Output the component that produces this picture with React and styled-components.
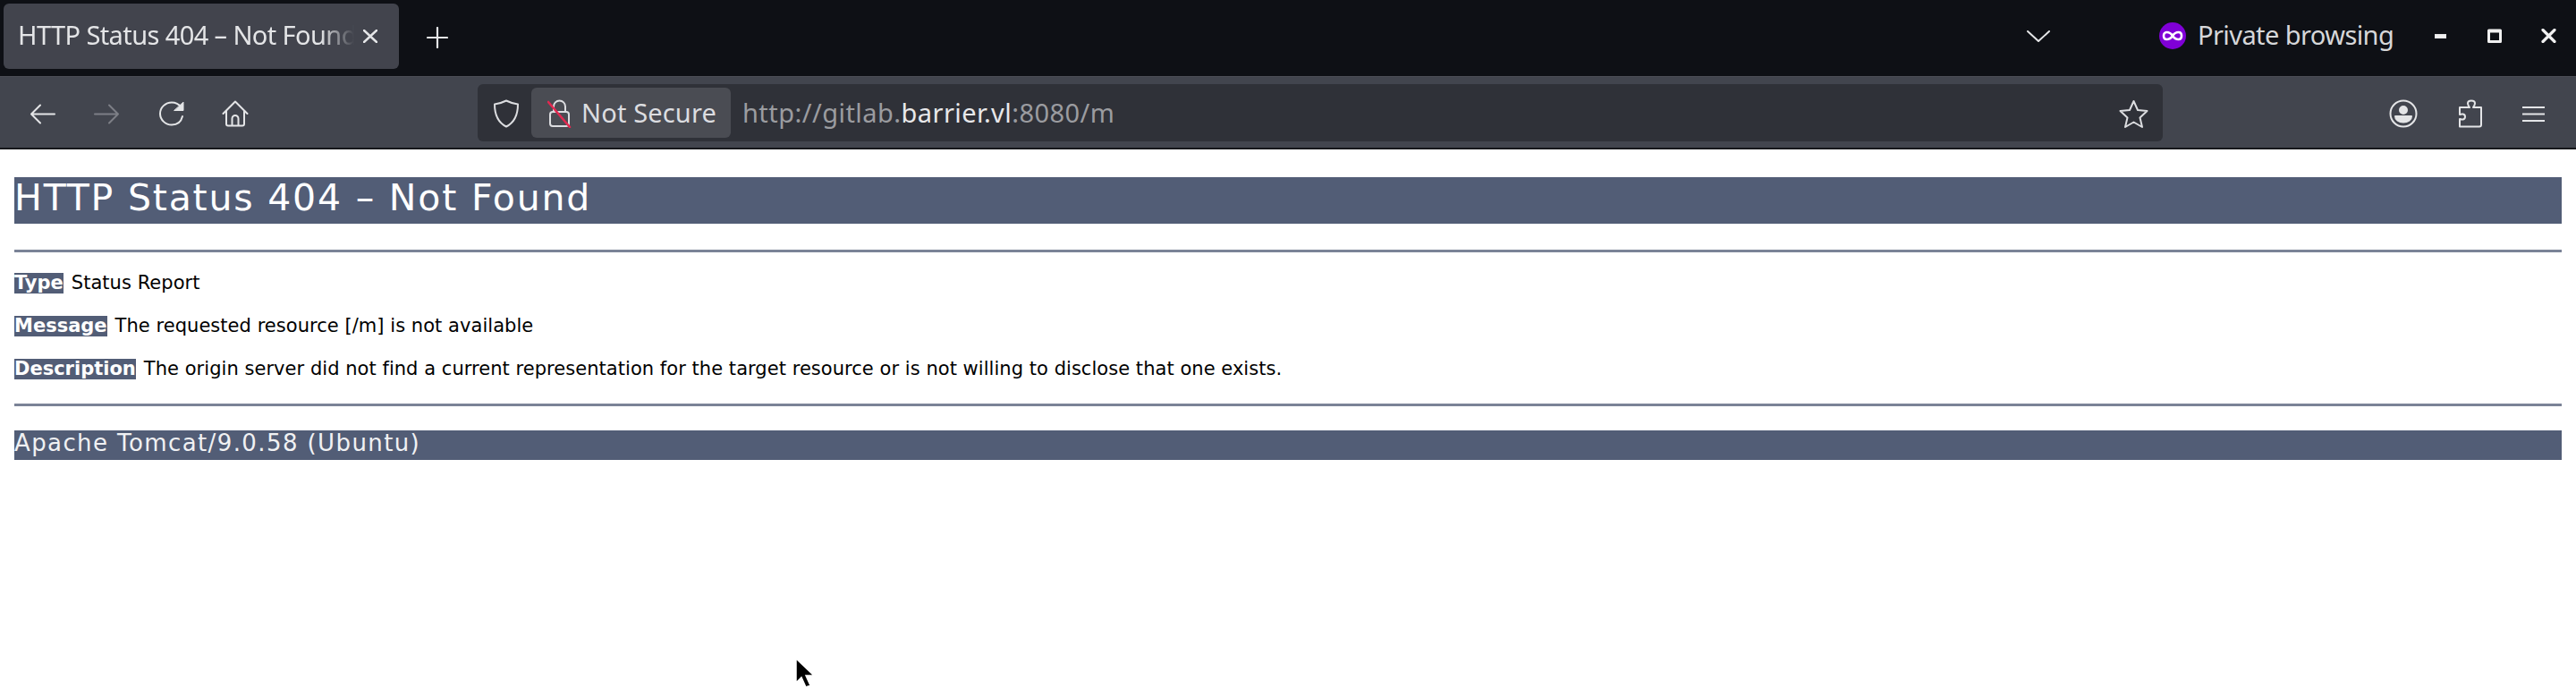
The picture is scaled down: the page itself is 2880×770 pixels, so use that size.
import React from "react";
import styled, { createGlobalStyle } from "styled-components";

const GlobalStyle = createGlobalStyle`
  html, body {
    margin: 0;
    padding: 0;
    background: #fff;
  }
  body {
    font-family: "DejaVu Sans", sans-serif;
    overflow: hidden;
  }
`;

const Window = styled.div`
  position: relative;
  width: 2880px;
  height: 770px;
  overflow: hidden;
  background: #fff;
`;

const TabBar = styled.div`
  height: 85px;
  box-sizing: border-box;
  background: #0e1015;
  display: flex;
  align-items: flex-start;
  padding-top: 4px;
  padding-left: 4px;
`;

const Tab = styled.div`
  position: relative;
  width: 442px;
  height: 73px;
  box-sizing: border-box;
  padding: 0 24px 0 16px;
  border-radius: 6px;
  background: #42444d;
  display: flex;
  align-items: center;
  justify-content: space-between;
  overflow: hidden;
`;

const TabTitle = styled.span`
  width: 376px;
  overflow: hidden;
  white-space: nowrap;
  color: #e4e5e7;
  font-family: "Noto Sans", sans-serif;
  font-size: 29px;
  letter-spacing: -0.6px;
  margin-top: -4px;
  -webkit-mask-image: linear-gradient(to right, #000 90%, transparent 100%);
  mask-image: linear-gradient(to right, #000 90%, transparent 100%);
`;

const NewTab = styled.div`
  display: flex;
  margin: 26px 0 0 31px;
`;

const TabBarRight = styled.div`
  margin-left: auto;
  display: flex;
  align-items: center;
  height: 72px;
  color: #e4e5e7;
`;

const PrivateLabel = styled.span`
  color: #d6d7d9;
  font-family: "Noto Sans", sans-serif;
  font-size: 29px;
  letter-spacing: -0.58px;
  margin: -4px 0 0 13px;
  width: 265px;
  white-space: nowrap;
`;

const Toolbar = styled.div`
  height: 82px;
  box-sizing: border-box;
  background: #42454e;
  border-top: 1px solid #4c4e56;
  border-bottom: 2px solid #16171b;
  display: flex;
  align-items: center;
`;

const NavGroup = styled.div`
  display: flex;
  align-items: center;
  width: 534px;
  flex: none;
  padding: 3px 0 0 33px;
  box-sizing: border-box;
`;

const UrlBar = styled.div`
  width: 1884px;
  height: 64px;
  flex: none;
  box-sizing: border-box;
  background: #2f3138;
  border-radius: 6px;
  padding: 2px 16px 0 17px;
  display: flex;
  align-items: center;
`;

const NotSecure = styled.div`
  width: 223px;
  height: 56px;
  box-sizing: border-box;
  margin: -2px 0 0 13px;
  padding: 2px 0 0 18px;
  border-radius: 6px;
  background: #4a4c53;
  display: flex;
  align-items: center;
  gap: 11px;
`;

const NotSecureText = styled.span`
  color: #dcdde0;
  font-family: "Noto Sans", sans-serif;
  font-size: 29px;
  letter-spacing: 0.15px;
  margin-top: -3px;
  white-space: nowrap;
`;

const Url = styled.div`
  flex: 1;
  margin-left: 13px;
  color: #9b9ca0;
  font-family: "Noto Sans", sans-serif;
  font-size: 29px;
  letter-spacing: 0.45px;
  margin-top: -3px;
  white-space: nowrap;
`;

const UrlHost = styled.span`
  color: #e8e8ea;
`;

const ToolActions = styled.div`
  flex: 1;
  display: flex;
  align-items: center;
  padding: 3px 0 0 253px;
`;

const Page = styled.main`
  padding: 31px 16px 0;
  color: #000;
`;

const Heading = styled.h1`
  margin: 0;
  height: 52px;
  padding-left: 0;
  background: #525d76;
  color: #fff;
  font-family: "DejaVu Sans", sans-serif;
  font-weight: 400;
  font-size: 41px;
  line-height: 47px;
  letter-spacing: 1.8px;
  white-space: nowrap;
`;

const Rule = styled.hr`
  margin: ${(props) => props.$top}px 0 0;
  height: 3px;
  border: 0;
  background: #7b8397;
`;

const Line = styled.p`
  margin: ${(props) => props.$top}px 0 0;
  height: 23px;
  display: flex;
  align-items: center;
  white-space: pre;
  font-family: "DejaVu Sans", sans-serif;
  font-size: 21px;
  line-height: 23px;
  letter-spacing: 0.04px;
`;

const Label = styled.b`
  background: #525d76;
  color: #fff;
  font-weight: 700;
  letter-spacing: 0;
  margin-right: 9px;
`;

const Footer = styled.h3`
  margin: 27px 0 0;
  height: 33px;
  background: #525d76;
  color: #f0f1f3;
  font-family: "DejaVu Sans", sans-serif;
  font-weight: 400;
  font-size: 26px;
  line-height: 29px;
  letter-spacing: 1.4px;
  white-space: nowrap;
`;

const Cursor = styled.svg`
  position: absolute;
  left: 888px;
  top: 735px;
`;

const Glyph = styled.svg`
  flex: none;
  margin-right: ${(props) => props.$gap || 0}px;
  fill: none;
  stroke: ${(props) => props.$color || "#e4e5e7"};
  stroke-width: ${(props) => props.$weight || 2};
  stroke-linecap: round;
  stroke-linejoin: round;
`;

const Icon = ({ w, h, box = "0 0 24 24", gap, color, weight, children }) => (
  <Glyph
    width={w}
    height={h}
    viewBox={box}
    preserveAspectRatio="none"
    $gap={gap}
    $color={color}
    $weight={weight}
  >
    {children}
  </Glyph>
);

export default function App() {
  return (
    <Window>
      <GlobalStyle />
      <TabBar>
        <Tab>
          <TabTitle>HTTP Status 404 – Not Found</TabTitle>
          <Icon w={16} h={15} box="0 0 16 15" weight={2.4}>
            <path d="M1 1l14 13M15 1L1 14" />
          </Icon>
        </Tab>
        <NewTab>
          <Icon w={24} h={24} box="0 0 24 24" weight={2.2}>
            <path d="M12 1v22M1 12h22" />
          </Icon>
        </NewTab>
        <TabBarRight>
          <Icon w={26} h={13} box="0 0 26 13" gap={122}>
            <path d="M1 1l12 11L25 1" />
          </Icon>
          <svg width="30" height="30" viewBox="0 0 30 30">
            <ellipse cx="15" cy="15" rx="15" ry="15" fill="#8000d7" />
            <path
              d="M15 15c-2-3-4-4-6.500-4S5 13 5 15s1 4 3.500 4S13 18 15 15c2 3 4 4 6.500 4s3.500-2 3.500-4-1-4-3.500-4S17 12 15 15z"
              fill="none"
              stroke="#fff"
              strokeWidth="2.600"
            />
          </svg>
          <PrivateLabel>Private browsing</PrivateLabel>
          <Icon w={13} h={5} box="0 0 13 5" gap={46} weight={0}>
            <rect y="0" width="13" height="5" fill="#f0f0f0" />
          </Icon>
          <Icon w={16} h={16} box="0 0 16 16" gap={44} color="#f0f0f0" weight={3}>
            <path d="M1.500 2h13v12.500h-13zM1 3h14" strokeLinecap="butt" />
          </Icon>
          <Icon w={17} h={16} box="0 0 17 16" gap={22} color="#f0f0f0" weight={3.200}>
            <path d="M2 1.500l13 13M15 1.500l-13 13" />
          </Icon>
        </TabBarRight>
      </TabBar>
      <Toolbar>
        <NavGroup>
          <Icon w={29} h={23} box="0 0 29 23" gap={43}>
            <path d="M28 11.500H2M12 1.500l-10 10 10 10" />
          </Icon>
          <Icon w={29} h={23} box="0 0 29 23" gap={43} color="#7d7f86">
            <path d="M1 11.500h26M17 1.500l10 10-10 10" />
          </Icon>
          <Icon w={30} h={28} box="0 0 30 28" gap={41}>
            <path d="M27 17c-1.500 6-6 9.500-12 9.500C8 26.500 2 21 2 14S8 1.500 15 1.500c5 0 8.500 2.500 11 5.500" />
            <path d="M28 1.500v9H18z" fill="#e4e5e7" strokeWidth="1" />
          </Icon>
          <Icon w={30} h={30} box="0 0 30 30">
            <path d="M1.500 15L15 1.500 28.500 15M5 12v14.500a2 2 0 0 0 2 2h16a2 2 0 0 0 2-2V12M11.500 28.500v-8a3.500 3.500 0 0 1 7 0v8" />
          </Icon>
        </NavGroup>
        <UrlBar>
          <Icon w={30} h={32} box="0 0 30 32" color="#dcdde0">
            <path d="M15 1.500C10 4 6 5 2 5.500c0 10 3 20 13 25 10-5 13-15 13-25-4-.5-8-1.500-13-4z" />
          </Icon>
          <NotSecure>
            <Icon w={27} h={32} box="0 0 27 32" color="#dcdde0">
              <path d="M7 14V8a6.500 6.500 0 0 1 13 0v6" />
              <rect x="3" y="14" width="21" height="16" rx="3" />
              <path d="M1 3l24 28" stroke="#e22850" strokeWidth="2.600" />
            </Icon>
            <NotSecureText>Not Secure</NotSecureText>
          </NotSecure>
          <Url>
            http://gitlab.<UrlHost>barrier.vl</UrlHost>:8080/m
          </Url>
          <Icon w={33} h={32} box="0 0 33 32" color="#dcdde0">
            <path d="M16.500 2l4.500 10 10.500 1-8 7.500 2.500 10.500-9.500-5.500L7 31l2.500-10.500-8-7.500 10.500-1z" />
          </Icon>
        </UrlBar>
        <ToolActions>
          <Icon w={32} h={32} box="0 0 32 32" gap={44}>
            <circle cx="16" cy="16" r="14.500" />
            <circle cx="16" cy="12" r="4" fill="#e4e5e7" />
            <path d="M7 19h18c0 4-4 6.500-9 6.500S7 23 7 19z" fill="#e4e5e7" />
          </Icon>
          <Icon w={29} h={32} box="0 0 29 32" gap={44}>
            <path d="M3 30.500h22a2 2 0 0 0 2-2V9H18c1.500-2 2-3 2-4.500C20 2.500 18.500 1.500 16 1.500s-4 1-4 3c0 1.500.500 2.500 2 4.500H3v8c2-1 6-1 6 2.500S5 23 3 22v8.500z" />
          </Icon>
          <Icon w={25} h={19} box="0 0 25 19" weight={2.200}>
            <path d="M0 2h25M0 9.500h25M0 17h25" strokeLinecap="butt" />
          </Icon>
        </ToolActions>
      </Toolbar>
      <Page>
        <Heading>HTTP Status 404 – Not Found</Heading>
        <Rule $top={29} />
        <Line $top={23}>
          <Label>Type</Label>Status Report
        </Line>
        <Line $top={25}>
          <Label>Message</Label>The requested resource [/m] is not available
        </Line>
        <Line $top={25}>
          <Label>Description</Label>The origin server did not find a current representation for the target resource or is not willing to disclose that one exists.
        </Line>
        <Rule $top={27} />
        <Footer>Apache Tomcat/9.0.58 (Ubuntu)</Footer>
      </Page>
      <Cursor width="26" height="35" viewBox="0 0 26 35">
        <path
          d="M2 1v27l6-6 5 11 5-2-5-11h9z"
          fill="#000"
          stroke="#fff"
          strokeWidth="1.500"
        />
      </Cursor>
    </Window>
  );
}
